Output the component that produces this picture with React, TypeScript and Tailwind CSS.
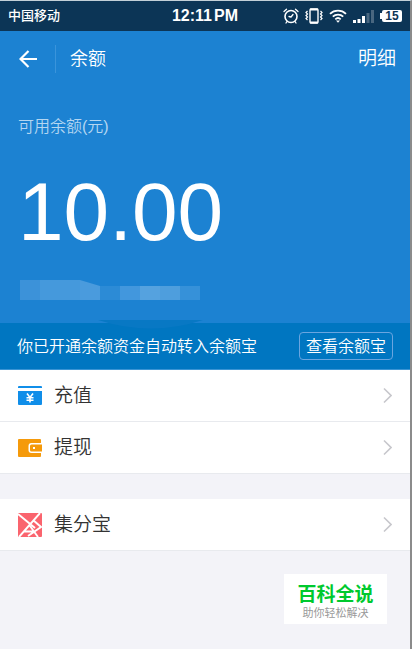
import type { ReactNode } from 'react';

function AlarmIcon() {
  return (
    <svg width="16" height="16" viewBox="0 0 16 16" fill="none" stroke="white" strokeWidth="1.6" strokeLinecap="round">
      <circle cx="8" cy="8.5" r="6" />
      <path d="M1 3.5 3.5 1.2M15 3.5 12.5 1.2M8 9 10 6.500M8 9 6 8.500M4 13.5 3 15M12 13.5 13 15" strokeWidth="1.3" />
    </svg>
  );
}

function VibrateIcon() {
  return (
    <svg width="18" height="16" viewBox="0 0 18 16" fill="none" stroke="white">
      <rect x="5" y="1" width="8" height="14" rx="1" strokeWidth="1.4" />
      <path d="M5 1.500h8M5 14.500h8" strokeWidth="1.8" />
      <path d="M2.5 3 1 4.5 2.5 6 1 7.5 2.5 9 1 10.5 2.500 12M15.5 3 17 4.5 15.5 6 17 7.5 15.5 9 17 10.5 15.500 12" strokeWidth="1.2" />
    </svg>
  );
}

function WifiIcon() {
  return (
    <svg width="18" height="14" viewBox="0 0 18 14" fill="none" stroke="white" strokeWidth="1.8">
      <path d="M1 4.8a11.5 11.5 0 0 1 16 0M3.8 7.7a7.5 7.5 0 0 1 10.4 0M6.3 10.3a4 4 0 0 1 5.4 0" />
      <path d="M7 11.6h4L9 13.8z" fill="white" stroke="none" />
    </svg>
  );
}

function SignalIcon() {
  return (
    <svg width="21" height="13" viewBox="0 0 21 13" fill="white">
      <path d="M0 10h3v3H0zM4.500 9h3v4h-3zM9 6h3v7H9z" />
      <path d="M13.500 3h3v10h-3zM18 0h3v13h-3z" opacity=".25" />
    </svg>
  );
}

function BackIcon() {
  return (
    <svg width="18" height="18" viewBox="0 0 18 18" fill="none" stroke="white" strokeWidth="2.2">
      <path d="M18 9H1.500M9.500 1 1.500 9l8 8" />
    </svg>
  );
}

function RechargeIcon() {
  return (
    <svg width="24" height="24" viewBox="0 0 24 24" fill="#108ee9">
      <path d="M1 2h22a1 1 0 0 1 1 1v1H0V3a1 1 0 0 1 1-1zM0 7h24v13a1 1 0 0 1-1 1H1a1 1 0 0 1-1-1z" />
      <path d="M9 9.500l3 4 3-4M8.500 13.800h7M8.500 16.300h7M12 13v5.500" fill="none" stroke="white" strokeWidth="1.6" />
    </svg>
  );
}

function WithdrawIcon() {
  return (
    <svg width="24" height="24" viewBox="0 0 24 24" fill="#f59a0b">
      <path d="M1 3h21a1 1 0 0 1 1 1v16a1 1 0 0 1-1 1H1a1 1 0 0 1-1-1V4a1 1 0 0 1 1-1z" />
      <path d="M24 7H13.500a3 3 0 0 0-3 3v4a3 3 0 0 0 3 3H24z" fill="white" />
      <path d="M13.500 8.500H24v7H13.500a1.500 1.500 0 0 1-1.500-1.500v-4a1.500 1.500 0 0 1 1.500-1.500z" />
      <rect x="15" y="11" width="2" height="2" fill="white" />
    </svg>
  );
}

function PointsIcon() {
  return (
    <svg width="24" height="24" viewBox="0 0 24 24">
      <rect width="24" height="24" rx="1" fill="#fa646e" />
      <path
        d="M0 1l17 14M22 0 1 24M15 7l8 7L10 23M6 18.500h9M12 13l8 11"
        fill="none"
        stroke="white"
        strokeWidth="1.9"
      />
    </svg>
  );
}

function ChevronIcon() {
  return (
    <svg width="9" height="17" viewBox="0 0 9 17" fill="none" stroke="#c7c7cc" strokeWidth="1.6">
      <path d="M1 1.500l7 7-7 7" />
    </svg>
  );
}

function Row({ icon, label }: { icon: ReactNode; label: string }) {
  return (
    <button className="flex h-[52px] w-full items-center gap-3 border-b border-[#e8eaee] bg-white px-[18px] text-left">
      {icon}
      <span className="flex-1 pt-px text-[19px] leading-6 text-[#333333]">{label}</span>
      <ChevronIcon />
    </button>
  );
}

export default function App() {
  return (
    <div className="min-h-screen border-t border-r-2 border-t-[#c3d0d8] border-r-[#8b8b8b] bg-[#f3f3f8] font-['Liberation_Sans','Noto_Sans_CJK_SC',sans-serif] font-[350]">
      <div className="relative flex h-[30px] items-center justify-between bg-[#0c3556] px-2 text-white">
        <span className="text-[13px] font-medium">中国移动</span>
        <span className="absolute inset-x-0 flex justify-center gap-0.5 text-[16px] font-bold">
          <span>12:11</span>
          <span>PM</span>
        </span>
        <div className="flex items-center gap-1.5">
          <AlarmIcon />
          <VibrateIcon />
          <WifiIcon />
          <SignalIcon />
          <span className="flex items-center">
            <span className="h-1.5 w-0.5 bg-white" />
            <span className="flex h-3 w-5 items-center justify-center rounded-xs bg-white text-[12px] font-bold text-[#0c3556]">
              15
            </span>
          </span>
        </div>
      </div>

      <main>
        <section className="bg-[#1c82d2] text-white">
          <header className="flex h-14 items-center pr-[14px] pl-[19px]">
            <button aria-label="返回">
              <BackIcon />
            </button>
            <span className="ml-[18px] h-7 w-px bg-[#3a94db]" />
            <h1 className="ml-[14px] flex-1 text-[18px]">余额</h1>
            <button className="text-[19px]">明细</button>
          </header>

          <div className="px-[18px] pt-7">
            <p className="text-[16px] leading-6 text-[#b4d6f1]">可用余额(元)</p>
            <p className="mt-8 text-[82px] leading-[82px]">10.00</p>
          </div>

          <div className="mt-[26px] h-[44px]">
            <svg className="relative block" width="210" height="52" viewBox="0 0 210 52" aria-hidden="true">
              <path d="M20 1h20v20H20z" fill="#3c92d9" />
              <path d="M40 1h40v20H40z" fill="#4599dc" />
              <path d="M80 1l20 6v14H80z" fill="#4a9bdd" />
              <path d="M100 7h20v14h-20z" fill="#2c8bd6" />
              <path d="M120 7h20v14h-20z" fill="#4297dd" />
              <path d="M140 7h20v14h-20z" fill="#55a2df" />
              <path d="M160 7h20v14h-20z" fill="#4e9edd" />
              <path d="M180 7h20v14h-20z" fill="#3691d9" />
              <path d="M98 41h105q-52 17-105 0z" fill="#0878c4" />
            </svg>
          </div>

          <div className="flex h-[47px] items-center justify-between border-b border-[#3a94d4] bg-[#0076c1] px-[17px] text-[16px]">
            <p className="pt-px">你已开通余额资金自动转入余额宝</p>
            <button className="flex h-7 items-center rounded-sm border border-[#6aa5e0] px-1.5 pt-px">查看余额宝</button>
          </div>
        </section>

        <Row icon={<RechargeIcon />} label="充值" />
        <Row icon={<WithdrawIcon />} label="提现" />
        <div className="mt-[25px]">
          <Row icon={<PointsIcon />} label="集分宝" />
        </div>

        <aside className="mt-[23px] mr-[23px] ml-auto flex h-[50px] w-[103px] flex-col items-center justify-end bg-white pb-[5px]">
          <p className="text-[19px] leading-6 font-bold text-[#00c92e]">百科全说</p>
          <p className="text-[11px] leading-3 font-normal text-[#999999]">助你轻松解决</p>
        </aside>
      </main>
    </div>
  );
}
